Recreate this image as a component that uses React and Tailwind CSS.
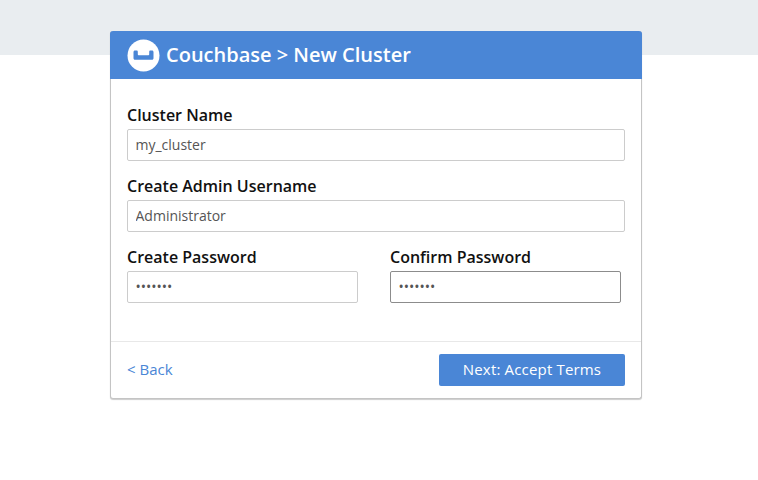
const Label = ({ children }) => (
  <label className="block h-[22px] text-[16px] leading-[22px] font-semibold text-[#111]">{children}</label>
);

const Field = ({ value, type = "text", focused = false, className = "" }) => (
  <input
    readOnly
    type={type}
    value={value}
    className={`block h-[32px] rounded-[2px] border bg-white pr-2 pl-[7.5px] pb-[2px] text-[14px] text-[#555] outline-none ${focused ? "border-[#8c8c8c]" : "border-[#ccc]"} ${className}`}
  />
);

export default function App() {
  return (
    <div className="h-[480px] w-[758px] overflow-hidden bg-white font-['Open_Sans',sans-serif]">
      <div className="h-[55px] bg-[#e9edf0]" />
      <div className="ml-[110px] -mt-[24px] w-[532px] rounded-[3px] border-x border-b border-[#c4c4c4] bg-white shadow-[0_1px_1px_rgba(0,0,0,0.2)]">
        <div className="-mx-px flex h-[48px] items-center gap-[7px] rounded-t-[3px] bg-[#4a86d6] pl-[17px]">
          <svg width="33" height="33" viewBox="0 0 33 33" className="shrink-0">
            <circle cx="16.5" cy="16.5" r="16" fill="#fff" />
            <path
              d="M6.5 13c0-.9.6-1.5 1.5-1.5h1.6c.7 0 1.2.5 1.2 1.2v2.5c0 .6.4 1 1 1h9.4c.6 0 1-.4 1-1v-2.5c0-.7.5-1.2 1.2-1.2H25c.9 0 1.5.6 1.5 1.5v6.3c0 .9-.6 1.5-1.5 1.5H8c-.9 0-1.5-.6-1.5-1.5z"
              fill="#4a86d6"
            />
          </svg>
          <h1 className="-ml-px text-[20px] leading-[28px] font-semibold text-white">Couchbase &gt; New Cluster</h1>
        </div>
        <div className="px-4 pt-[25px] pb-[38px]">
          <Label>Cluster Name</Label>
          <Field value="my_cluster" className="mt-[3px] w-[498px]" />
          <div className="mt-[14px]">
            <Label>Create Admin Username</Label>
            <Field value="Administrator" className="mt-[3px] w-[498px]" />
          </div>
          <div className="mt-[14px] flex gap-[32px]">
            <div>
              <Label>Create Password</Label>
              <Field value="1234567" type="password" className="mt-[3px] w-[231px]" />
            </div>
            <div>
              <Label>Confirm Password</Label>
              <Field value="1234567" type="password" focused className="mt-[3px] w-[231px]" />
            </div>
          </div>
        </div>
        <div className="flex h-[57px] items-center justify-between border-t border-[#e8e8e8] pr-4 pl-4">
          <a className="pb-[2px] text-[15px] text-[#4a86d6]">&lt; Back</a>
          <button className="h-[32px] w-[186px] rounded-[2px] bg-[#4a86d6] pb-[2px] text-[15px] tracking-[0.17px] text-white">Next: Accept Terms</button>
        </div>
      </div>
    </div>
  );
}
